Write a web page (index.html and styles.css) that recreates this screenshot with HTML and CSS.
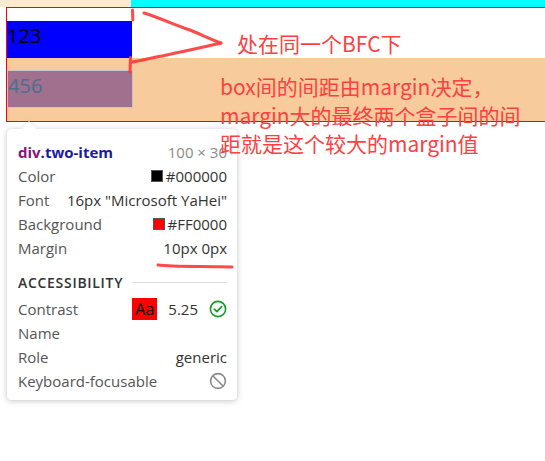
FILE: index.html
```html
<!DOCTYPE html>
<html lang="zh-CN">
<head>
<meta charset="utf-8">
<title>BFC margin</title>
<link rel="stylesheet" href="styles.css">
</head>
<body>
<div class="page">
  <div class="top-strip">
    <div class="strip-left"></div>
    <div class="strip-right"></div>
  </div>
  <div class="bfc">
    <div class="gap"></div>
    <div class="one-item">123</div>
    <div class="margin-zone">
      <div class="two-item">456</div>
    </div>
  </div>

  <div class="tooltip">
    <div class="row title-row">
      <span class="sel"><span class="tag">div</span><span class="cls">.two-item</span></span>
      <span class="dim">100 × 30</span>
    </div>
    <div class="row"><span class="label">Color</span><span class="value"><i class="swatch black"></i>#000000</span></div>
    <div class="row"><span class="label">Font</span><span class="value">16px "Microsoft YaHei"</span></div>
    <div class="row"><span class="label">Background</span><span class="value"><i class="swatch red"></i>#FF0000</span></div>
    <div class="row"><span class="label">Margin</span><span class="value">10px 0px</span></div>
    <div class="section"><span class="section-title">ACCESSIBILITY</span><span class="rule"></span></div>
    <div class="row contrast-row"><span class="label">Contrast</span>
      <span class="value contrast"><span class="aa">Aa</span><span class="ratio">5.25</span>
        <svg class="icon" width="18" height="18" viewBox="0 0 18 18"><circle cx="9" cy="9" r="7.6" fill="none" stroke="#0f9d24" stroke-width="1.6"/><path d="M5.4 9.2 L7.9 11.6 L12.6 6.6" fill="none" stroke="#0f9d24" stroke-width="1.7" stroke-linecap="round" stroke-linejoin="round"/></svg>
      </span></div>
    <div class="row"><span class="label">Name</span><span class="value"></span></div>
    <div class="row"><span class="label">Role</span><span class="value">generic</span></div>
    <div class="row"><span class="label">Keyboard-focusable</span><span class="value">
      <svg class="icon" width="18" height="18" viewBox="0 0 18 18"><circle cx="9" cy="9" r="7.4" fill="none" stroke="#8a8a8a" stroke-width="1.6"/><path d="M4 4 L14 14" stroke="#8a8a8a" stroke-width="1.6"/></svg>
    </span></div>
  </div>

  <svg class="marks" width="545" height="461" viewBox="0 0 545 461">
    <g fill="none" stroke="#ff3b3b" stroke-width="3" stroke-linecap="round" stroke-linejoin="round" opacity="0.92">
      <path d="M132.5 10 L132.8 20"/>
      <path d="M130.5 57.5 L130 72"/>
      <path d="M144 13 C160 18 175 25 190 30 C200 34 210 39 221 43"/>
      <path d="M221 43 C200 48 180 52 162 56 C150 58 140 61 132 62"/>
      <path d="M158 265 C175 267 200 266 232 267"/>
    </g>
  </svg>

  <div class="note note-1">处在同一个BFC下</div>
  <div class="note note-2">box间的间距由margin决定，<br>margin大的最终两个盒子间的间<br>距就是这个较大的margin值</div>
</div>
</body>
</html>
```

FILE: styles.css
```css
html, body {
  margin: 0;
  padding: 0;
  background: #ffffff;
  overflow: hidden;
}

.page {
  position: relative;
  width: 545px;
  height: 461px;
  font-family: "Noto Sans", "Open Sans", sans-serif;
}

.top-strip {
  display: flex;
  height: 7px;
}

.strip-left {
  width: 131px;
  background: #feeacf;
}

.strip-right {
  flex: 1;
  background: #00ffff;
}

.bfc {
  margin-left: 6px;
  border: 1px solid #ff0000;
  border-right: 0;
}

.gap {
  height: 13px;
}

.one-item {
  width: 125px;
  height: 37px;
  background: #0000ff;
  color: #000000;
  font-size: 20px;
  line-height: 29px;
  font-family: "Noto Sans", sans-serif;
}

.margin-zone {
  background: #f8cb9c;
  padding: 12px 0 13px;
}

.two-item {
  width: 124px;
  height: 36px;
  border: 1px solid #c9c3cc;
  background: #a1708f;
  color: #4d6f8e;
  font-size: 20px;
  line-height: 29px;
  font-family: "Noto Sans", sans-serif;
}

.tooltip {
  position: absolute;
  left: 7px;
  top: 129px;
  width: 230px;
  height: 271px;
  box-sizing: border-box;
  padding: 11px 10px 6px 11px;
  background: #ffffff;
  border-radius: 4px;
  box-shadow: 0 1px 6px rgba(0, 0, 0, 0.22), 0 0 1px rgba(0, 0, 0, 0.15);
  font-family: "Open Sans", "Noto Sans", sans-serif;
  font-size: 15px;
  color: #333333;
}

.tooltip::before {
  content: "";
  position: absolute;
  left: 17px;
  top: -6px;
  width: 10px;
  height: 10px;
  background: #ffffff;
  transform: rotate(45deg);
  box-shadow: -1px -1px 2px rgba(0, 0, 0, 0.08);
}

.row {
  position: relative;
  display: flex;
  justify-content: space-between;
  align-items: center;
  height: 24px;
  white-space: nowrap;
}

.title-row {
  height: 24px;
}

.sel {
  font-weight: 700;
  font-size: 15px;
}

.tag {
  color: #881280;
}

.cls {
  color: #1a1aa6;
}

.dim {
  color: #8a8a8a;
  font-size: 15px;
}

.label {
  color: #555555;
}

.value {
  display: flex;
  align-items: center;
  color: #333333;
}

.swatch {
  display: inline-block;
  width: 10px;
  height: 10px;
  border: 1px solid #555555;
  margin-right: 3px;
}

.swatch.black {
  background: #000000;
}

.swatch.red {
  background: #ff0000;
}

.section {
  display: flex;
  align-items: center;
  height: 24px;
  margin-top: 10px;
  gap: 9px;
}

.section-title {
  font-size: 14px;
  font-weight: 600;
  letter-spacing: 0.7px;
  color: #333333;
}

.rule {
  flex: 1;
  height: 1px;
  background: #dddddd;
}

.contrast-row {
  margin-top: 3px;
}

.aa {
  display: inline-flex;
  align-items: center;
  justify-content: center;
  width: 25px;
  height: 22px;
  background: #ff0000;
  color: #000000;
  font-size: 16px;
}

.ratio {
  margin-left: 11px;
  margin-right: 11px;
}

.icon {
  display: block;
}

.marks {
  position: absolute;
  left: 0;
  top: 0;
  pointer-events: none;
}

.note {
  position: absolute;
  color: #ff4040;
  font-family: "Noto Sans CJK SC", "Noto Sans", sans-serif;
  font-size: 21px;
  line-height: 28.5px;
  white-space: nowrap;
}

.note-1 {
  left: 237px;
  top: 29px;
}

.note-2 {
  left: 220px;
  top: 72px;
}
```
